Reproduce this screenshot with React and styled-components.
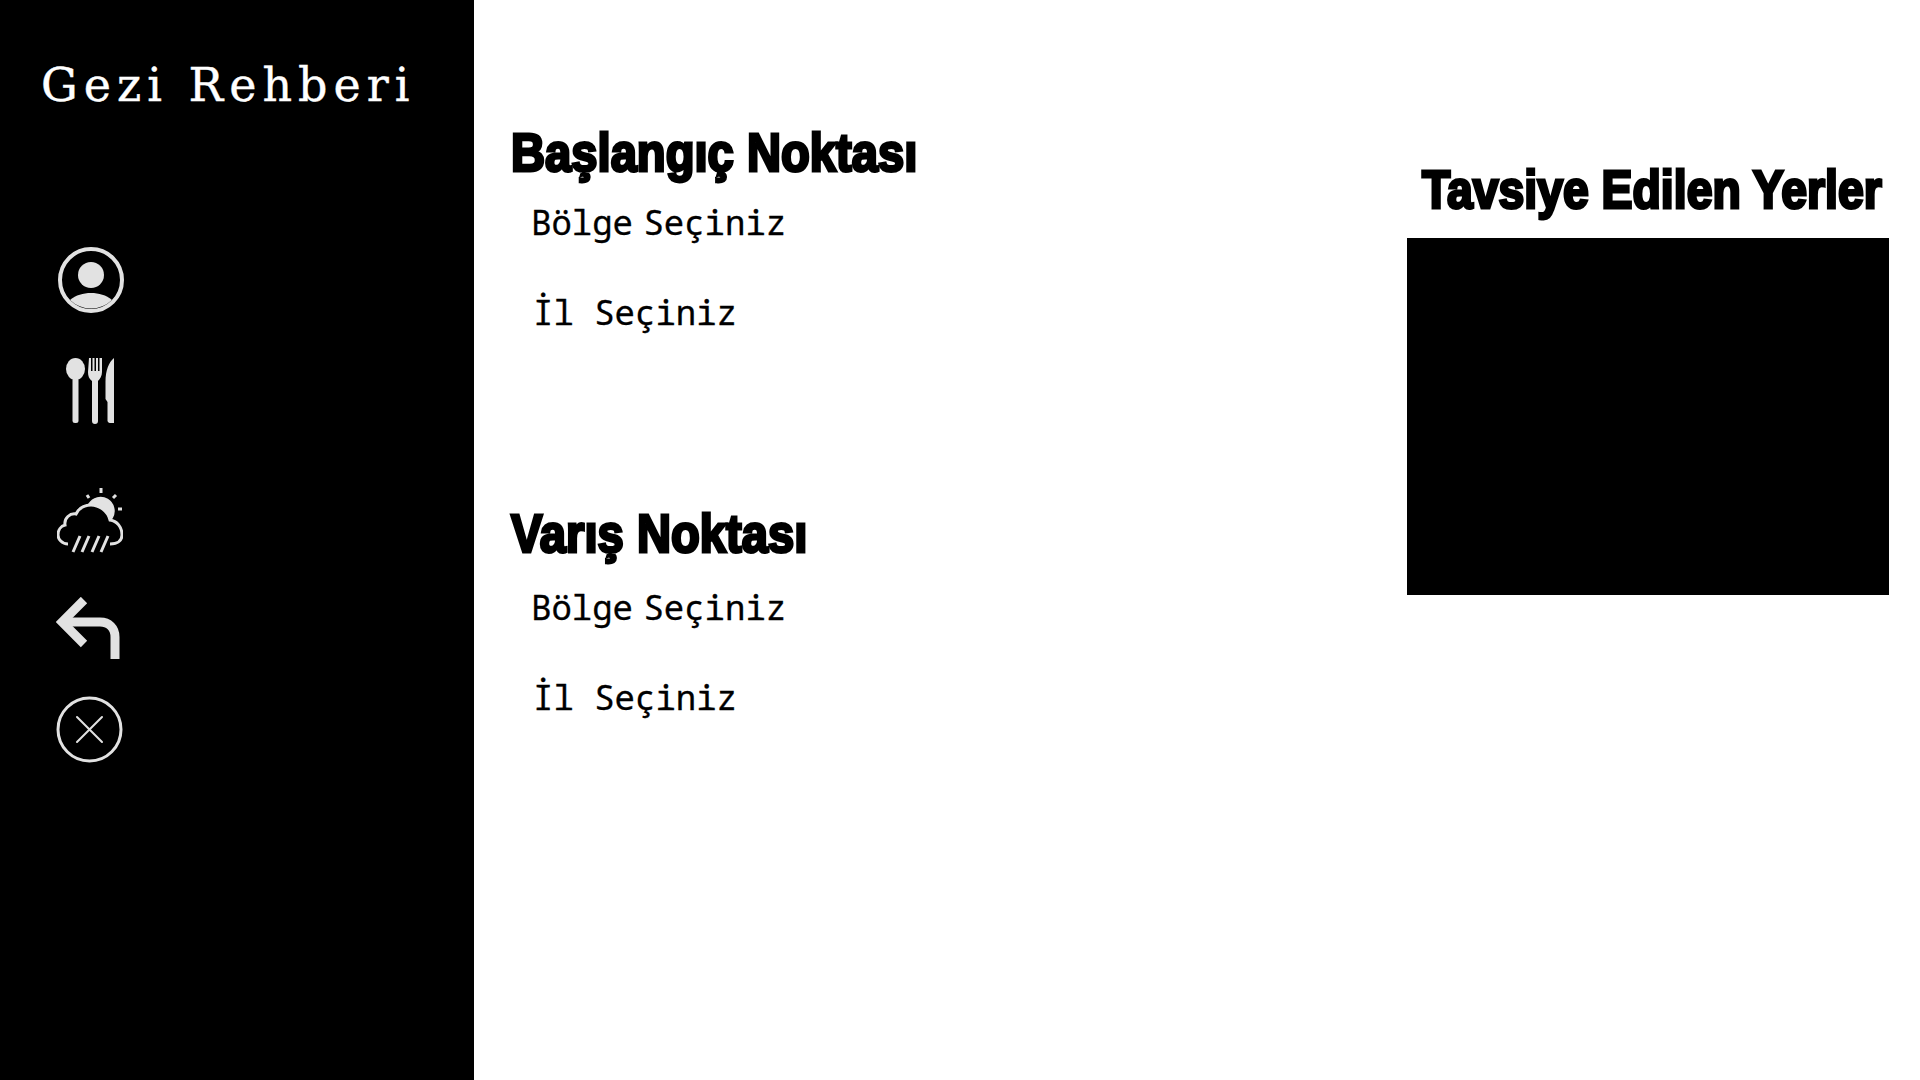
import React from 'react';
import styled, { createGlobalStyle } from 'styled-components';

const Global = createGlobalStyle`
  html, body { margin: 0; padding: 0; background: #fff; }
  body { font-family: "DejaVu Sans", sans-serif; }
`;

const Page = styled.div`
  display: flex;
  width: 1920px;
  height: 1080px;
  overflow: hidden;
`;

const Sidebar = styled.aside`
  width: 474px;
  flex: none;
  background: #000;
  padding: 59px 0 0 41px;
  box-sizing: border-box;
`;

const Logo = styled.h1`
  margin: 0 0 136px;
  font-family: "DejaVu Serif", serif;
  font-weight: 400;
  font-size: 46px;
  line-height: 52px;
  letter-spacing: 6px;
  color: #fff;
  -webkit-text-stroke: 0.4px #fff;
  white-space: nowrap;
`;

const Nav = styled.nav`
  display: flex;
  flex-direction: column;
  align-items: flex-start;
  color: #e2e2e2;
`;

const NavItem = styled.a`
  display: block;
  height: ${p => p.$h}px;
  margin-bottom: ${p => p.$gap}px;
  margin-left: ${p => p.$left || 0}px;
  svg { display: block; }
`;

const Main = styled.main`
  flex: 1;
  display: flex;
  justify-content: space-between;
  min-width: 0;
`;

const Routes = styled.section`
  padding: 122px 0 0 37px;
`;

const RouteBlock = styled.div`
  margin-bottom: ${p => p.$gap}px;
`;

const Heading = styled.h2`
  margin: 0 0 ${p => p.$below || 0}px;
  font-family: "Liberation Sans", sans-serif;
  font-weight: 700;
  font-size: 53px;
  line-height: 62px;
  color: #000;
  -webkit-text-stroke: 3px #000;
  transform: scaleX(0.89);
  transform-origin: left center;
  white-space: nowrap;
`;

const Choice = styled.div`
  margin-left: ${p => p.$left}px;
  height: 90px;
  font-family: "Noto Sans Mono", "DejaVu Sans Mono", monospace;
  font-size: 34px;
  line-height: 42px;
  word-spacing: ${p => p.$tight ? '-10px' : '0'};
  color: #000;
  -webkit-text-stroke: 0.3px #000;
  white-space: nowrap;
`;

const Suggest = styled.section`
  width: 482px;
  margin-right: 31px;
  padding-top: 156px;
  flex: none;
`;

const SuggestTitle = styled(Heading)`
  margin: 0 0 15px 15px;
  line-height: 67px;
  transform: scaleX(0.875);
`;

const SuggestBox = styled.div`
  height: 357px;
  background: #000;
`;

const UserIcon = () => (
  <svg width="66" height="66" viewBox="0 0 66 66">
    <circle cx="33" cy="33" r="31" fill="none" stroke="currentColor" strokeWidth="4" />
    <circle cx="33" cy="28" r="13" fill="currentColor" />
    <path d="M12 53C18 48 25 46 33 46S48 48 54 53A30 30 0 0 1 12 53Z" fill="currentColor" />
  </svg>
);

const CutleryIcon = () => (
  <svg width="48" height="66" viewBox="0 0 48 66" fill="currentColor">
    <ellipse cx="9.500" cy="11" rx="9.500" ry="11" />
    <rect x="6.500" y="20" width="6" height="45" rx="2.500" />
    <path d="M23 0h2v13h1.500V0h2v13H30V0h2v13h1.500V0h2.500v14c0 4-2 7-4 9v40a2.500 2.500 0 0 1-6 0V23c-3-2-4-5-4-9z" />
    <path d="M48 0v65h-4a2.500 2.500 0 0 1-2.500-3V44l-2-3V24C39.500 12 43 4 48 0z" />
  </svg>
);

const WeatherIcon = () => (
  <svg width="66" height="66" viewBox="0 0 66 66" fill="none" stroke="currentColor">
    <path d="M32 16A13 13 0 0 1 55 30L53 32C51 23 42 16 32 16Z" fill="currentColor" strokeWidth="1.500" />
    <path d="M44 0v5M59 7l-3 3M30 7l2 3M61 21h4" strokeWidth="3" />
    <path d="M11 56C5 56 1 51 1 47C1 42 4 38 8 37C7 30 13 25 19 26C22 20 28 17 34 17C42 17 51 23 53 32C60 33 65 39 65 47C65 52 61 56 53 56" strokeWidth="3" />
    <path d="M23 48l-7 16M32 48l-7 16M42 48l-7 16M51 48l-7 16" strokeWidth="3" />
  </svg>
);

const BackIcon = () => (
  <svg width="64" height="62" viewBox="0 0 64 62" fill="none" stroke="currentColor" strokeWidth="9">
    <path d="M28 3L6 25l22 22" />
    <path d="M6 25h38c9 0 15 6 15 15v22" />
  </svg>
);

const CloseIcon = () => (
  <svg width="68" height="68" viewBox="0 0 68 68" fill="none" stroke="currentColor">
    <circle cx="33.500" cy="33.500" r="31.500" strokeWidth="3" />
    <path d="M21 21l25 25M46 21L21 46" strokeWidth="2" strokeLinecap="round" />
  </svg>
);

const navItems = [
  { id: 'user', Icon: UserIcon, h: 66, gap: 45, left: 17 },
  { id: 'food', Icon: CutleryIcon, h: 66, gap: 64, left: 25 },
  { id: 'weather', Icon: WeatherIcon, h: 66, gap: 43, left: 16 },
  { id: 'back', Icon: BackIcon, h: 62, gap: 37, left: 15 },
  { id: 'close', Icon: CloseIcon, h: 68, gap: 0, left: 15 },
];

const routes = [
  { title: 'Başlangıç Noktası', below: 17, gap: 122 },
  { title: 'Varış Noktası', below: 21, gap: 0 },
];

export default function App() {
  return (
    <Page>
      <Global />
      <Sidebar>
        <Logo>Gezi Rehberi</Logo>
        <Nav>
          {navItems.map(({ id, Icon, h, gap, left }) => (
            <NavItem key={id} $h={h} $gap={gap} $left={left}>
              <Icon />
            </NavItem>
          ))}
        </Nav>
      </Sidebar>
      <Main>
        <Routes>
          {routes.map(r => (
            <RouteBlock key={r.title} $gap={r.gap}>
              <Heading $below={r.below}>{r.title}</Heading>
              <Choice $left={20} $tight>Bölge Seçiniz</Choice>
              <Choice $left={22}>İl Seçiniz</Choice>
            </RouteBlock>
          ))}
        </Routes>
        <Suggest>
          <SuggestTitle>Tavsiye Edilen Yerler</SuggestTitle>
          <SuggestBox />
        </Suggest>
      </Main>
    </Page>
  );
}
